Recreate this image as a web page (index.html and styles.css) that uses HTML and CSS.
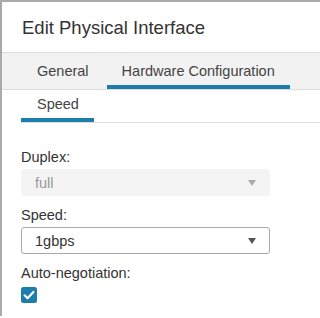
FILE: index.html
```html
<!DOCTYPE html>
<html>
<head>
<meta charset="utf-8">
<link rel="stylesheet" href="styles.css">
</head>
<body>
<div class="dialog">
  <div class="header">Edit Physical Interface</div>
  <div class="tabs">
    <div class="tab">General</div>
    <div class="tab active">Hardware Configuration</div>
  </div>
  <div class="subtabs">
    <div class="subtab active">Speed</div>
  </div>
  <div class="content">
    <div class="field">
      <div class="label">Duplex:</div>
      <div class="select disabled"><span>full</span><span class="caret"></span></div>
    </div>
    <div class="field">
      <div class="label">Speed:</div>
      <div class="select"><span>1gbps</span><span class="caret"></span></div>
    </div>
    <div class="field">
      <div class="label">Auto-negotiation:</div>
      <div class="checkbox">
        <svg width="16" height="16" viewBox="0 0 16 16"><rect x="0" y="0" width="16" height="16" rx="2.5" fill="#1b7eab"/><path d="M3.6 8.3 L6.6 11.2 L12.4 4.9" fill="none" stroke="#fff" stroke-width="2.2" stroke-linecap="round" stroke-linejoin="round"/></svg>
      </div>
    </div>
  </div>
</div>
</body>
</html>
```
FILE: styles.css
```css
html, body {
  margin: 0;
  padding: 0;
  background: #fff;
}
body {
  font-family: "Liberation Sans", Arial, sans-serif;
  color: #333;
}
.dialog {
  border-top: 2px solid #aaa;
  border-left: 2px solid #aaa;
  height: 316px;
  box-sizing: border-box;
}
.header {
  height: 51px;
  box-sizing: border-box;
  padding: 15px 0 0 20px;
  font-size: 18.5px;
  line-height: 22px;
  color: #333;
  border-bottom: 1px solid #dcdcdc;
  box-shadow: 0 1px 2px rgba(0,0,0,0.05);
}
.tabs {
  display: flex;
  gap: 3px;
  background: #f2f2f2;
  height: 37px;
  box-sizing: border-box;
  border-bottom: 1px solid #dcdcdc;
  padding-left: 20px;
}
.tab {
  padding: 9px 15px 0;
  font-size: 14.5px;
  line-height: 18px;
  color: #444;
  height: 32px;
  box-sizing: border-box;
}
.tab.active {
  border-bottom: 4px solid #1b7eab;
  height: 36px;
}
.subtabs {
  display: flex;
  margin-left: 19px;
  border-bottom: 1px solid #dcdcdc;
  height: 33px;
  box-sizing: border-box;
}
.subtab {
  padding: 5px 15px 0 16px;
  font-size: 14.5px;
  line-height: 18px;
  color: #444;
  box-sizing: border-box;
  height: 32px;
}
.subtab.active {
  border-bottom: 4px solid #1b7eab;
}
.content {
  padding: 25px 0 0 19px;
  display: flex;
  flex-direction: column;
  gap: 10px;
}
.field {
  display: flex;
  flex-direction: column;
  gap: 3px;
}
.label {
  font-size: 14.5px;
  line-height: 18px;
  color: #333;
}
.select {
  width: 249px;
  height: 27px;
  box-sizing: border-box;
  display: flex;
  align-items: center;
  justify-content: space-between;
  padding: 0 13px 0 13px;
  font-size: 14.5px;
  color: #333;
  border: 1px solid #a8a8a8;
  border-radius: 3px;
  background: #fff;
}
.select.disabled {
  border-color: #f4f4f4;
  background: #f4f4f4;
  color: #999;
}
.caret {
  width: 0;
  height: 0;
  border-left: 4px solid transparent;
  border-right: 4px solid transparent;
  border-top: 6px solid #555;
}
.select.disabled .caret {
  border-top-color: #aaa;
}
.checkbox {
  margin-top: 2px;
  width: 16px;
  height: 16px;
}
.checkbox svg {
  display: block;
}
```
